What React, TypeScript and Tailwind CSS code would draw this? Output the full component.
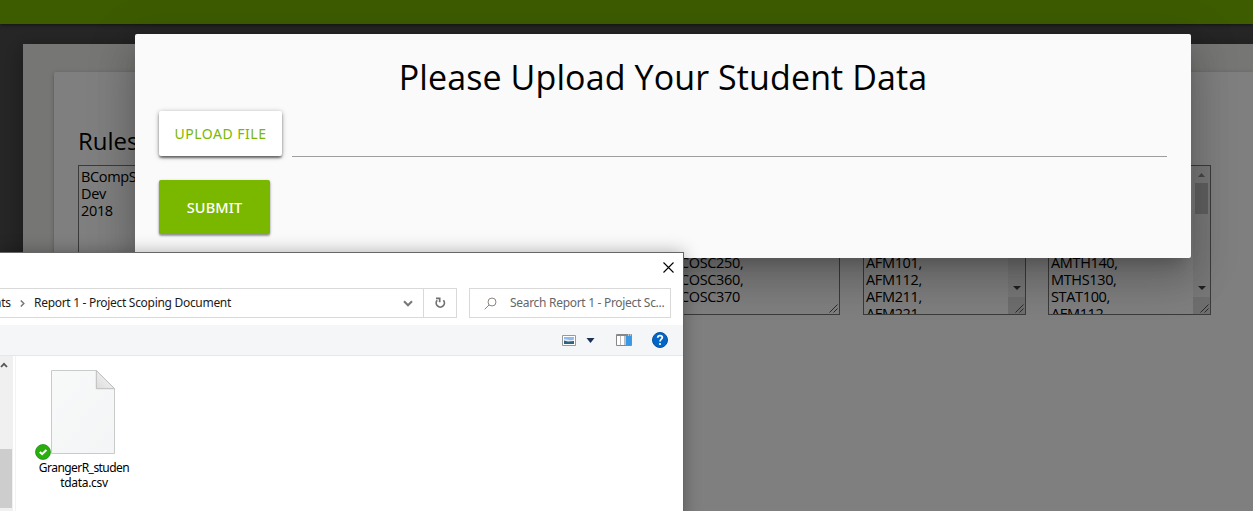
type BoxProps = { width: string; lines: string[]; offset?: string; scroll?: boolean };

function Grip() {
  return (
    <svg width="9" height="9" viewBox="0 0 9 9" stroke="#555" strokeWidth="1" fill="none">
      <path d="M0.5 8.5 8.5 0.5M4.5 8.5 8.5 4.5" />
    </svg>
  );
}

function TextBox({ width, lines, offset = "pt-[2px]", scroll }: BoxProps) {
  return (
    <div className={`relative flex h-[150px] shrink-0 overflow-hidden border border-[#767676] ${width}`}>
      <div className={`flex-1 pl-[2px] font-['Open_Sans',sans-serif] text-[14.5px] leading-[17px] tracking-[-0.35px] text-black ${offset}`}>
        {lines.map((line) => (
          <div key={line} className="h-[17px] whitespace-nowrap">{line}</div>
        ))}
      </div>
      {scroll && (
        <div className="flex w-[17px] flex-col items-center bg-[#f1f1f1]">
          <svg className="mt-[7px] h-[4px] w-[7px] shrink-0" viewBox="0 0 7 4"><path d="M3.5 0 7 4H0z" fill="#8c8c8c" /></svg>
          <div className="mt-[6px] h-[31px] w-[13px] bg-[#c1c1c1]" />
          <div className="flex-1" />
          <svg className="mb-[7px] h-[4px] w-[8px] shrink-0" viewBox="0 0 8 4"><path d="M0 0h8L4 4z" fill="#404040" /></svg>
          <div className="h-[17px] w-full bg-[#dcdcdc]" />
        </div>
      )}
      <div className="absolute right-px bottom-px"><Grip /></div>
    </div>
  );
}

function PlannerPage() {
  return (
    <div className="flex h-[511px] flex-col bg-[#4c4c4c]">
      <div className="relative z-10 h-6 shrink-0 bg-[#7ab800] shadow-[0_2px_2px_0_rgba(0,0,0,.14),0_3px_1px_-2px_rgba(0,0,0,.12),0_1px_5px_0_rgba(0,0,0,.2)]" />
      <div className="mt-5 ml-[23px] flex-1 bg-[#edece8] pt-7 pl-[31px] shadow-[0_8px_17px_2px_rgba(0,0,0,.14),0_3px_14px_2px_rgba(0,0,0,.12),0_5px_5px_-3px_rgba(0,0,0,.2)]">
        <div className="h-full rounded-tl-[2px] bg-white pt-[54px] pl-6 shadow-[0_2px_2px_0_rgba(0,0,0,.14),0_1px_5px_0_rgba(0,0,0,.2)]">
          <h2 className="h-[39px] font-['Open_Sans',sans-serif] text-[24px] leading-[30px] text-black">Rules</h2>
          <div className="flex gap-[22px]">
            <TextBox width="w-[208px]" lines={["BCompSc", "Dev", "2018"]} />
            <TextBox width="w-[163px]" lines={[]} />
            <div className="w-[163px] shrink-0" />
            <div className="-ml-px"><TextBox width="w-[163px]" offset="pt-[88px]" lines={["COSC250,", "COSC360,", "COSC370"]} /></div>
            <div className="ml-px"><TextBox width="w-[163px]" scroll offset="pt-[88px]" lines={["AFM101,", "AFM112,", "AFM211,", "AFM221,"]} /></div>
            <TextBox width="w-[163px]" scroll offset="pt-[88px]" lines={["AMTH140,", "MTHS130,", "STAT100,", "AFM112,"]} />
          </div>
        </div>
      </div>
    </div>
  );
}

function UploadModal() {
  return (
    <div className="absolute top-[34px] left-[135px] z-20 h-[224px] w-[1056px] rounded-[2px] bg-[#fafafa] px-6 pt-[23px] shadow-[0_24px_38px_3px_rgba(0,0,0,.14),0_9px_46px_8px_rgba(0,0,0,.12),0_11px_15px_-7px_rgba(0,0,0,.2)]">
      <h1 className="h-[54px] text-center font-['Open_Sans',sans-serif] text-[34px] leading-[40px] tracking-[0.11px] whitespace-nowrap text-black">Please Upload Your Student Data</h1>
      <div className="flex h-[46px] gap-[10px]">
        <button className="h-[45px] w-[123px] rounded-[2px] bg-white font-['Noto_Sans',sans-serif] text-[14px] tracking-[0.5px] text-[#7ab800] shadow-[0_2px_2px_0_rgba(0,0,0,.3),0_3px_3px_-2px_rgba(0,0,0,.35),0_1px_5px_0_rgba(0,0,0,.35)]">UPLOAD FILE</button>
        <div className="flex-1 border-b border-[#9e9e9e]" />
      </div>
      <button className="mt-[23px] h-[54px] w-[111px] rounded-[2px] bg-[#7ab800] pt-px font-['Noto_Sans',sans-serif] text-[14.5px] font-medium tracking-[0.15px] text-white shadow-[0_2px_2px_0_rgba(0,0,0,.25),0_1px_3px_0_rgba(0,0,0,.3)]">SUBMIT</button>
    </div>
  );
}

function FileDialog() {
  return (
    <div className="absolute top-[252px] left-[-1px] z-30 flex h-[270px] w-[685px] flex-col border border-[#666] bg-white font-['Noto_Sans',sans-serif] text-[12px] text-[#1a1a1a] shadow-[0_0_16px_rgba(0,0,0,.3)]">
      <div className="flex h-[35px] shrink-0 justify-end pt-[9px] pr-[9px]">
        <svg width="11" height="11" viewBox="0 0 11 11" stroke="#000" strokeWidth="1.1"><path d="M.5.5l10 10M10.5.5l-10 10" /></svg>
      </div>
      <div className="flex h-[30px] shrink-0 gap-3">
        <div className="flex w-[457px] border border-l-0 border-[#d9d9d9]">
          <div className="flex flex-1 items-center">
            <span className="-ml-[6px] w-[26px] tracking-[-0.2px]">nts</span>
            <svg className="h-[7px] w-[5px]" viewBox="0 0 5 7" fill="none" stroke="#777" strokeWidth="1.5"><path d="M.8.5 3.8 3.5.8 6.5" /></svg>
            <span className="ml-[9px] w-[197px] tracking-[-0.3px] whitespace-nowrap">Report 1 - Project Scoping Document</span>
            <svg className="mr-[10px] ml-auto h-[7px] w-[10px]" viewBox="0 0 10 7" fill="none" stroke="#777" strokeWidth="2"><path d="M1 1.3 5 5.3 9 1.3" /></svg>
          </div>
          <div className="flex w-[33px] items-center justify-center border-l border-[#d9d9d9]">
            <svg className="ml-px" width="11" height="12" viewBox="0 0 11 12" fill="none" stroke="#707070" strokeWidth="1.7"><path d="M2.2 3.3a4.1 4.1 0 1 0 6.2 0M1 1.3h3.7v4" /></svg>
          </div>
        </div>
        <div className="flex w-[202px] items-center border border-[#d9d9d9] pl-[14px] text-[#666]">
          <svg className="shrink-0" width="13" height="13" viewBox="0 0 13 13" fill="none" stroke="#8d8581" strokeWidth="1"><circle cx="8" cy="5" r="4" /><path d="M5 8 .7 12.3" /></svg>
          <span className="ml-[13px] tracking-[-0.3px] whitespace-nowrap">Search Report 1 - Project Sc...</span>
        </div>
      </div>
      <div className="mt-[7px] flex h-[31px] shrink-0 items-center border-b border-[#e5e7e9] bg-[#f4f6f8] pl-[562px]">
        <svg width="14" height="11" viewBox="0 0 14 11"><path d="M.5.5h13v10H.5z" fill="#fff" stroke="#999" /><path d="M2 2h10v4H2z" fill="#8ebcf0" /><path d="M2 4.5c3-1 5 2 10 0V7H2z" fill="#e7f1f5" /><path d="M2 5.5l4 1 6-.5V9H2z" fill="#31637d" /></svg>
        <svg className="ml-[10px]" width="9" height="5" viewBox="0 0 9 5"><path d="M.5 0h8L4.5 5z" fill="#1c3156" /></svg>
        <svg className="ml-[21px]" width="16" height="12" viewBox="0 0 16 12"><path d="M.5.5h15v11H.5z" fill="#fff" stroke="#888" /><path d="M1 1h14v1H1z" fill="#888" /><path d="M4.5 2v9M8.5 2v9" stroke="#bbb" /><path d="M9.5 2H15v9H9.5z" fill="#3898e5" /><path d="M12 1h1m1 0h1" stroke="#fff" /></svg>
        <svg className="ml-5" width="16" height="16" viewBox="0 0 16 16"><circle cx="8" cy="8" r="7.5" fill="#0067c9" stroke="#06529b" /><path d="M5.7 5.7c.2-3 4.9-2.7 4.6 0-.2 1.5-2.2 1.5-2.2 3.7" fill="none" stroke="#fff" strokeWidth="1.8" /><circle cx="8" cy="12" r="1.1" fill="#fff" /></svg>
      </div>
      <div className="flex min-h-0 flex-1">
        <div className="flex w-[13px] shrink-0 flex-col bg-[#f0f0f0]">
          <svg className="mt-[6px] h-[6px] w-[8px]" viewBox="0 0 8 6" fill="none" stroke="#555" strokeWidth="1.8"><path d="M1 5 4 1.8 7 5" /></svg>
          <div className="mt-[81px] h-[59px] w-3 bg-[#cdcdcd]" />
        </div>
        <div className="ml-[2px] flex flex-1 border-l border-[#f3f3f3] pt-[14px] pl-5">
          <div className="flex w-[96px] flex-col items-center">
            <div className="relative h-[84px] w-[64px]">
              <svg className="-ml-px" width="64" height="84" viewBox="0 0 64 84">
                <defs>
                  <linearGradient id="paper" x1="0" y1="0" x2="1" y2="1"><stop stopColor="#f8f9f9" /><stop offset="1" stopColor="#f3f5f6" /></linearGradient>
                  <linearGradient id="fold" x1="0" y1="1" x2="1" y2="0"><stop stopColor="#dcdcdc" /><stop offset="1" stopColor="#fafafa" /></linearGradient>
                </defs>
                <path d="M.5.5h44.8l18.2 18.2v64.8H.5z" fill="url(#paper)" stroke="#c9cbcb" />
                <path d="M45.3.5v18.2h18.2z" fill="url(#fold)" stroke="#bdbdbd" />
              </svg>
              <svg className="absolute top-[74px] left-[-17px]" width="16" height="16" viewBox="0 0 16 16"><circle cx="8" cy="8" r="7.5" fill="#29ae0b" stroke="#168b12" strokeWidth=".7" /><path d="M4.8 8 7.1 10.1 11.4 6" fill="none" stroke="#fff" strokeWidth="2" /></svg>
            </div>
            <div className="mt-[6px] text-center leading-[15px] tracking-[-0.55px] whitespace-nowrap text-black">GrangerR_studen<br /><span className="tracking-[-0.3px]">tdata.csv</span></div>
          </div>
        </div>
      </div>
    </div>
  );
}

export default function App() {
  return (
    <main className="relative h-[511px] w-[1253px] overflow-hidden">
      <PlannerPage />
      <div className="absolute inset-0 z-10 bg-black/50" />
      <UploadModal />
      <FileDialog />
    </main>
  );
}
